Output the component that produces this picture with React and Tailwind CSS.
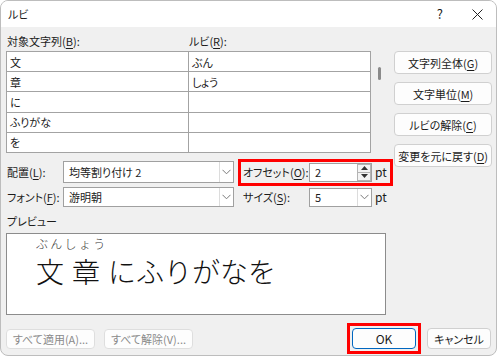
import React from "react";

function Key({ children }) {
  return <span className="underline underline-offset-2">{children}</span>;
}

function Btn({ children, className = "" }) {
  return (
    <div
      className={
        "flex items-center justify-center whitespace-nowrap bg-[#fdfdfd] border border-[#d0d0d0] rounded-[4px] " +
        className
      }
    >
      {children}
    </div>
  );
}

function Chevron() {
  return (
    <svg width="9" height="6" viewBox="0 0 9 6" className="text-[#7a7a7a]">
      <path d="M0.5 0.8 L4.5 4.8 L8.5 0.8" fill="none" stroke="currentColor" strokeWidth="1" />
    </svg>
  );
}

function Combo({ value, className = "" }) {
  return (
    <div className={"flex items-stretch bg-white border border-[#a0a0a0] " + className}>
      <div className="flex-1 flex items-center pl-[5px] whitespace-nowrap">{value}</div>
      <div className="w-[14px] border-l border-[#dcdcdc] flex items-center justify-center">
        <Chevron />
      </div>
    </div>
  );
}

function Spinner({ value }) {
  return (
    <div className="flex items-stretch bg-white border border-[#a0a0a0] w-[63px] h-[19px]">
      <div className="flex-1 flex items-center pl-[5px]">{value}</div>
      <div className="w-[14px] flex flex-col">
        <div className="flex-1 flex items-center justify-center border border-[#b4b4b4] bg-[#f4f4f4]">
          <svg width="7" height="4" viewBox="0 0 7 4">
            <path d="M0 4 L3.5 0 L7 4 Z" fill="#333" />
          </svg>
        </div>
        <div className="flex-1 flex items-center justify-center border border-t-0 border-[#b4b4b4] bg-[#f4f4f4]">
          <svg width="7" height="4" viewBox="0 0 7 4">
            <path d="M0 0 L3.5 4 L7 0 Z" fill="#333" />
          </svg>
        </div>
      </div>
    </div>
  );
}

const rows = [
  ["文", "ぶん"],
  ["章", "しょう"],
  ["に", ""],
  ["ふりがな", ""],
  ["を", ""],
];

export default function App() {
  return (
    <div className="w-[500px] h-[359px] bg-white font-['Noto_Sans_CJK_JP','Noto_Sans',sans-serif] [font-feature-settings:'palt'] text-[11px] leading-[16px] text-[#1b1b1b]">
      <div className="w-[497px] h-[356px] rounded-[8px] border border-[#bdbdbd] overflow-hidden flex flex-col bg-[#f0f0f0]">
        {/* title bar */}
        <div className="h-[26px] bg-white flex items-center pl-[7px] shrink-0">
          <span>ルビ</span>
          <span className="ml-auto text-[13px] mr-[29px]">?</span>
          <svg width="11" height="11" viewBox="0 0 11 11" className="mr-[13px]">
            <path d="M0.5 0.5 L10.5 10.5 M10.5 0.5 L0.5 10.5" stroke="#222" strokeWidth="1" />
          </svg>
        </div>

        <div className="flex flex-col pl-[5px] pr-[4px]">
          <div className="flex">
            {/* left column */}
            <div className="w-[388px] flex flex-col whitespace-nowrap">
              <div className="h-[24px] flex items-end pb-[2px]">
                <span className="w-[183px] pl-[1px]">
                  対象文字列(<Key>B</Key>):
                </span>
                <span>
                  ルビ(<Key>R</Key>):
                </span>
              </div>
              <div className="flex">
                <div className="w-[365px] h-[102px] grid grid-cols-2 grid-rows-5 border-l border-t border-[#a3a3a3]">
                  {rows.map(([a, b], i) => (
                    <React.Fragment key={i}>
                      <div className="bg-white border-r border-b border-[#a3a3a3] flex items-center pl-[3px]">
                        {a}
                      </div>
                      <div className="bg-white border-r border-b border-[#a3a3a3] flex items-center pl-[3px]">
                        {b}
                      </div>
                    </React.Fragment>
                  ))}
                </div>
                <div className="ml-[7px] mt-[16px] w-[3px] h-[13px] rounded-full bg-[#8a8a8a]" />
              </div>

              {/* row 1 */}
              <div className="flex items-center h-[26px] mt-[6px]">
                <span className="w-[57px] pl-[1px]">
                  配置(<Key>L</Key>):
                </span>
                <Combo value="均等割り付け 2" className="w-[171px] h-[22px]" />
                <div className="ml-[4px] w-[155px] h-[27px] border-[3px] border-[#ff0000] flex items-center">
                  <span className="w-[68px] pl-[2px]">
                    オフセット(<Key>O</Key>):
                  </span>
                  <Spinner value="2" />
                  <span className="ml-[3px] text-[12px]">pt</span>
                </div>
              </div>

              {/* row 2 */}
              <div className="flex items-center h-[20px] mt-[2px]">
                <span className="w-[57px] pl-[1px]">
                  フォント(<Key>F</Key>):
                </span>
                <Combo value="游明朝" className="w-[171px] h-[20px]" />
                <span className="ml-[9px] w-[66px]">
                  サイズ(<Key>S</Key>):
                </span>
                <Combo value="5" className="w-[63px] h-[19px]" />
                <span className="ml-[3px] text-[12px]">pt</span>
              </div>

              {/* preview */}
              <div className="mt-[6px] h-[16px] pl-[1px]">プレビュー</div>
              <div className="mt-[4px] w-[380px] h-[82px] bg-white border border-[#8c8c8c] pl-[29px] [font-feature-settings:normal]">
                <div className="mt-[2px] h-[16px] text-[12px] tracking-[2.3px] text-[#333] font-light">
                  ぶんしょう
                </div>
                <div className="mt-[5px] flex leading-[28px] text-[28px] font-light text-[#111]">
                  <span className="mr-[8px]">文</span>
                  <span className="mr-[8px]">章</span>
                  <span>にふりがなを</span>
                </div>
              </div>
            </div>

            {/* right column */}
            <div className="ml-[1px] pt-[24px] w-[98px] flex flex-col gap-[8px]">
              <Btn className="h-[23px]">
                文字列全体(<Key>G</Key>)
              </Btn>
              <Btn className="h-[23px]">
                文字単位(<Key>M</Key>)
              </Btn>
              <Btn className="h-[23px]">
                ルビの解除(<Key>C</Key>)
              </Btn>
              <Btn className="h-[23px]">
                変更を元に戻す(<Key>D</Key>)
              </Btn>
            </div>
          </div>

          {/* bottom buttons */}
          <div className="mt-[13px] h-[21px] flex items-center">
            <Btn className="w-[89px] h-[20px] text-[#8a8a8a] border-[#dedede]">すべて適用(A)...</Btn>
            <Btn className="ml-[9px] w-[89px] h-[20px] text-[#8a8a8a] border-[#dedede]">すべて解除(V)...</Btn>
            <div className="ml-auto mr-[1px] flex items-center">
              <div className="border-[3px] border-[#ff0000] p-[2px]">
                <div className="w-[64px] h-[21px] flex items-center justify-center bg-[#fdfdfd] border border-[#0067c0] rounded-[4px] text-[12px]">
                  OK
                </div>
              </div>
              <Btn className="ml-[6px] w-[64px] h-[21px]">キャンセル</Btn>
            </div>
          </div>
        </div>
      </div>
    </div>
  );
}
